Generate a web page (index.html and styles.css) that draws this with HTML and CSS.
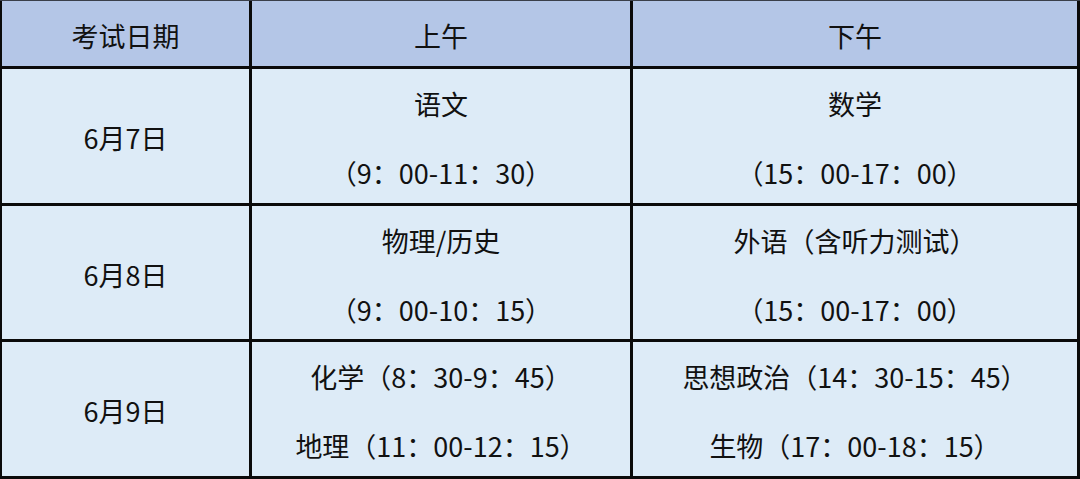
FILE: index.html
```html
<!DOCTYPE html>
<html lang="zh-CN">
<head>
<meta charset="utf-8">
<title>考试时间安排</title>
<link rel="stylesheet" href="styles.css">
</head>
<body>
<div class="table">
  <div class="cell head">考试日期</div>
  <div class="cell head">上午</div>
  <div class="cell head">下午</div>

  <div class="cell date">6月7日</div>
  <div class="cell"><div class="line">语文</div><div class="line">（9：00-11：30）</div></div>
  <div class="cell"><div class="line">数学</div><div class="line">（15：00-17：00）</div></div>

  <div class="cell date">6月8日</div>
  <div class="cell"><div class="line">物理/历史</div><div class="line">（9：00-10：15）</div></div>
  <div class="cell"><div class="line">外语（含听力测试）</div><div class="line">（15：00-17：00）</div></div>

  <div class="cell date">6月9日</div>
  <div class="cell"><div class="line">化学（8：30-9：45）</div><div class="line">地理（11：00-12：15）</div></div>
  <div class="cell"><div class="line">思想政治（14：30-15：45）</div><div class="line">生物（17：00-18：15）</div></div>
</div>
</body>
</html>
```
FILE: styles.css
```css
html, body {
  margin: 0;
  padding: 0;
  background: #000;
}

.table {
  display: grid;
  grid-template-columns: 247px 378px 444px;
  grid-template-rows: 65px 134px 133px 134px;
  gap: 3px;
  width: 1080px;
  height: 479px;
  box-sizing: border-box;
  padding: 0 3px 3px 2px;
  border-top: 1px solid #3a3f4a;
  background: #0a0a0a;
  font-family: "Noto Sans CJK SC", "Noto Sans", sans-serif;
  font-size: 27px;
  color: #111;
}

.cell {
  background: #ddebf7;
  display: flex;
  flex-direction: column;
  align-items: center;
  justify-content: center;
  gap: 39px;
  padding-top: 5px;
  box-sizing: border-box;
  line-height: 30px;
  white-space: nowrap;
}

.cell.head {
  background: #b4c6e7;
  padding-top: 5px;
}

.cell.date {
  padding-top: 4px;
}

.line {
  line-height: 30px;
}
```
